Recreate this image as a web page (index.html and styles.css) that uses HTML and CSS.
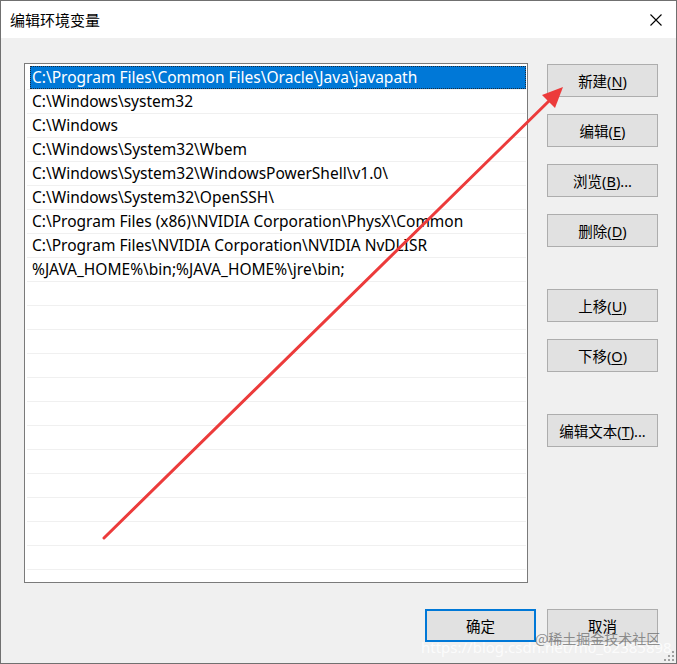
FILE: index.html
```html
<!DOCTYPE html>
<html lang="zh-CN">
<head>
<meta charset="utf-8">
<title>编辑环境变量</title>
<link rel="stylesheet" href="styles.css">
</head>
<body>
<div class="window">
  <div class="titlebar">
    <span class="title">编辑环境变量</span>
    <svg class="close" width="12" height="12" viewBox="0 0 12 12"><path d="M0.5 0.5 L11.5 11.5 M11.5 0.5 L0.5 11.5" stroke="#000" stroke-width="1.1" fill="none"/></svg>
  </div>
  <div class="body">
    <div class="main">
      <div class="list">
        <div class="row sel"><span class="cell">C:\Program Files\Common Files\Oracle\Java\javapath</span></div>
        <div class="row"><span class="cell">C:\Windows\system32</span></div>
        <div class="row"><span class="cell">C:\Windows</span></div>
        <div class="row"><span class="cell">C:\Windows\System32\Wbem</span></div>
        <div class="row"><span class="cell">C:\Windows\System32\WindowsPowerShell\v1.0\</span></div>
        <div class="row"><span class="cell">C:\Windows\System32\OpenSSH\</span></div>
        <div class="row"><span class="cell">C:\Program Files (x86)\NVIDIA Corporation\PhysX\Common</span></div>
        <div class="row"><span class="cell">C:\Program Files\NVIDIA Corporation\NVIDIA NvDLISR</span></div>
        <div class="row"><span class="cell">%JAVA_HOME%\bin;%JAVA_HOME%\jre\bin;</span></div>
        <div class="row"></div>
        <div class="row"></div>
        <div class="row"></div>
        <div class="row"></div>
        <div class="row"></div>
        <div class="row"></div>
        <div class="row"></div>
        <div class="row"></div>
        <div class="row"></div>
        <div class="row"></div>
        <div class="row"></div>
        <div class="row"></div>
        <div class="row"></div>
      </div>
      <div class="side">
        <button class="btn">新建(<u>N</u>)</button>
        <button class="btn">编辑(<u>E</u>)</button>
        <button class="btn">浏览(<u>B</u>)...</button>
        <button class="btn">删除(<u>D</u>)</button>
        <button class="btn group">上移(<u>U</u>)</button>
        <button class="btn">下移(<u>O</u>)</button>
        <button class="btn group">编辑文本(<u>T</u>)...</button>
      </div>
    </div>
    <div class="footer">
      <button class="btn default">确定</button>
      <button class="btn">取消</button>
    </div>
  </div>
  <svg class="arrow" width="677" height="664" viewBox="0 0 677 664">
    <line x1="104" y1="538" x2="551" y2="99" stroke="#ec3b3b" stroke-width="3" stroke-linecap="round"/>
    <polygon points="563,87 555,108 542,95" fill="#ec3b3b"/>
  </svg>
  <div class="wm wm2">https://blog.csdn.net/m0_62385898</div>
  <div class="wm wm1">@稀土掘金技术社区</div>
  <svg class="grip" width="10" height="10" viewBox="0 0 10 10">
    <rect x="8" y="0" width="2" height="2" fill="#a0a0a0"/>
    <rect x="4" y="4" width="2" height="2" fill="#a0a0a0"/>
    <rect x="8" y="4" width="2" height="2" fill="#a0a0a0"/>
    <rect x="0" y="8" width="2" height="2" fill="#a0a0a0"/>
    <rect x="4" y="8" width="2" height="2" fill="#a0a0a0"/>
    <rect x="8" y="8" width="2" height="2" fill="#a0a0a0"/>
  </svg>
</div>
</body>
</html>
```
FILE: styles.css
```css
html, body {
  margin: 0;
  padding: 0;
  background: #ffffff;
}

.window {
  position: relative;
  width: 677px;
  height: 664px;
  box-sizing: border-box;
  border: 1px solid #707070;
  background: #f0f0f0;
  font-family: "Noto Sans", "Noto Sans CJK SC", sans-serif;
  display: flex;
  flex-direction: column;
  overflow: hidden;
}

.titlebar {
  height: 37px;
  flex: none;
  background: #ffffff;
  display: flex;
  align-items: center;
  justify-content: space-between;
  padding: 0 14px 0 9px;
}

.title {
  font-family: "Noto Sans CJK SC", sans-serif;
  font-size: 15px;
  color: #000;
}

.close {
  display: block;
}

.body {
  flex: 1;
  padding: 25px 18px 20px 23px;
  display: flex;
  flex-direction: column;
}

.main {
  display: flex;
  gap: 19px;
}

.list {
  width: 504px;
  height: 520px;
  box-sizing: border-box;
  border: 1px solid #7a7a7a;
  background: #ffffff;
  padding: 2px 1px 0 2px;
  overflow: hidden;
}

.row {
  height: 24px;
  box-sizing: border-box;
  border-bottom: 1px solid #f0f0f0;
  display: flex;
  font-size: 15.5px;
  line-height: 23px;
  color: #000;
}

.cell {
  flex: 1;
  padding-left: 5px;
  white-space: nowrap;
}

.sel .cell {
  margin-left: 3px;
  padding-left: 2px;
  background: #0078d7;
  color: #ffffff;
  outline: 1px dotted #1a2a3a;
  outline-offset: -1px;
}

.side {
  display: flex;
  flex-direction: column;
  gap: 17px;
  padding-top: 1px;
}

.btn {
  width: 111px;
  height: 33px;
  box-sizing: border-box;
  border: 1px solid #adadad;
  background: #e1e1e1;
  font-family: "Noto Sans", "Noto Sans CJK SC", sans-serif;
  font-size: 14.5px;
  color: #000;
  padding: 0;
  margin: 0;
}

.btn u {
  text-underline-offset: 2px;
}

.group {
  margin-top: 25px;
}

.footer {
  margin-top: 26px;
  display: flex;
  justify-content: flex-end;
  gap: 11px;
}

.default {
  border: 2px solid #0078d7;
}

.arrow {
  position: absolute;
  left: -1px;
  top: -1px;
  pointer-events: none;
}

.wm {
  position: absolute;
  white-space: nowrap;
  pointer-events: none;
}

.wm1 {
  left: 534px;
  top: 627px;
  font-family: "Noto Sans CJK SC", sans-serif;
  font-size: 14px;
  color: rgba(110, 110, 110, 0.75);
}

.wm2 {
  left: 420px;
  top: 636px;
  font-family: "Noto Sans", sans-serif;
  font-size: 15px;
  color: rgba(255, 255, 255, 0.8);
}

.grip {
  position: absolute;
  right: 2px;
  bottom: 2px;
}
```
